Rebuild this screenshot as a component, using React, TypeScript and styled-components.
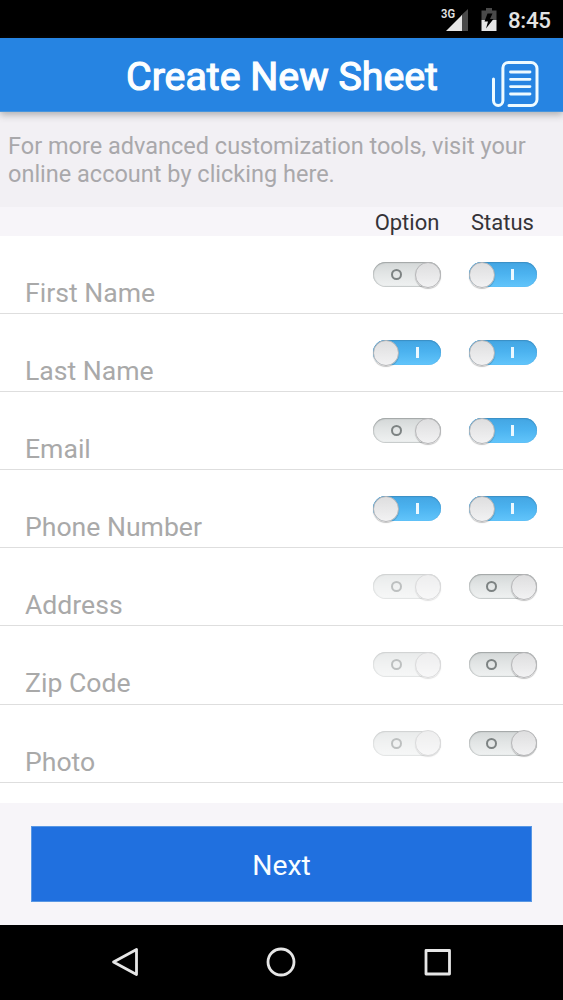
import React from "react";
import styled, { createGlobalStyle } from "styled-components";

const GlobalStyle = createGlobalStyle`
  * { box-sizing: border-box; }
  body { margin: 0; background: #000; font-family: Roboto, "Liberation Sans", sans-serif; }
`;

const Screen = styled.div`
  width: 563px;
  height: 1000px;
  display: flex;
  flex-direction: column;
  overflow: hidden;
  background: #f7f5f9;
`;

const StatusBar = styled.div`
  flex: none;
  height: 38px;
  padding: 1px 12px 0 0;
  display: flex;
  align-items: center;
  justify-content: flex-end;
  background: #000;
`;

const StatusIcons = styled.div`
  display: flex;
  gap: 10px;
  padding: 0 1px 4px 0;
  svg { display: block; }
`;

const Clock = styled.span`
  margin-left: 10px;
  color: #e3e3e3;
  font-size: 22.3px;
  line-height: 26px;
  width: 43px;
  font-weight: 500;
  letter-spacing: -0.3px;
  white-space: nowrap;
`;

const Header = styled.header`
  flex: none;
  position: relative;
  z-index: 1;
  height: 74px;
  display: grid;
  grid-template-columns: 80px 1fr 80px;
  align-items: center;
  background: #2684e2;
  border-bottom: 1px solid #4795dc;
  box-shadow: 0 3px 7px rgba(70, 74, 74, 0.38);
`;

const Title = styled.h1`
  grid-column: 2;
  margin: 4px 0 0 1px;
  text-align: center;
  color: #fcfeff;
  font-size: 39.3px;
  line-height: 46px;
  font-weight: 400;
  -webkit-text-stroke: 1.2px #fcfeff;
  white-space: nowrap;
`;

const SheetButton = styled.button`
  align-self: start;
  margin: 20px 0 0 6px;
  padding: 0;
  width: 52px;
  height: 52px;
  border: 0;
  background: none;
  svg { display: block; }
`;

const Notice = styled.p`
  flex: none;
  height: 95px;
  margin: 0;
  padding: 21px 8px 0;
  background: #f2f0f4;
  color: #a9a8ab;
  font-size: 23.5px;
  line-height: 27.5px;
`;

const ColumnHeads = styled.div`
  flex: none;
  height: 29px;
  display: grid;
  grid-template-columns: 96px 95px;
  justify-content: end;
  padding: 3px 13px 0 0;
  text-align: center;
  color: #353338;
  font-size: 22px;
  line-height: 26px;
`;

const List = styled.div`
  flex: none;
  height: 567px;
  background: #fff;
`;

const Row = styled.div`
  height: 78.1px;
  display: grid;
  grid-template-columns: 1fr 95.5px 94.5px;
  padding: 0 0 0 25px;
  border-bottom: 1px solid #dedede;
`;

const Label = styled.span`
  padding-top: 41px;
  color: #a9a9a9;
  font-size: 26.6px;
  line-height: 32px;
  white-space: nowrap;
`;

const Switch = styled.div<{ $on: boolean; $faded?: boolean }>`
  margin-top: 26px;
  width: 68px;
  height: 25px;
  border-radius: 13px;
  display: flex;
  align-items: center;
  flex-direction: ${(p) => (p.$on ? "row" : "row-reverse")};
  opacity: ${(p) => (p.$faded ? 0.5 : 1)};
  background: ${(p) =>
    p.$on
      ? "linear-gradient(#43a5e2, #4bb2ef 45%, #62c5fb)"
      : "linear-gradient(#d3d7d7, #e2e5e5 45%, #f0f2f2)"};
  box-shadow: ${(p) =>
    p.$on
      ? "inset 0 1px 1px #3b8fc5, inset 0 0 1px #4aa5dc"
      : "inset 0 1px 1px #a2a7a7, inset 0 0 1px 1px #c4c8c8"};
`;

const Thumb = styled.span`
  flex: none;
  width: 26px;
  height: 26px;
  border-radius: 50%;
  border: 1px solid #b6b6b8;
  background: linear-gradient(#dededf, #f2f2f3);
  box-shadow: 0 1px 1px rgba(0, 0, 0, 0.24);
`;

const MarkSlot = styled.span<{ $on: boolean }>`
  flex: 1;
  display: flex;
  justify-content: center;
  padding: ${(p) => (p.$on ? "0 6px 0 0" : "0 0 0 4px")};
`;

const OnMark = styled.i`
  width: 3px;
  height: 11px;
  background: #ecf8ff;
`;

const OffMark = styled.i`
  width: 11px;
  height: 11px;
  border-radius: 50%;
  border: 2px solid #7d8383;
`;

const Footer = styled.div`
  flex: none;
  height: 122px;
  padding: 23px 31px;
`;

const NextButton = styled.button`
  display: block;
  width: 501px;
  height: 76px;
  padding: 2px 0 0;
  border: 1px solid #5897e4;
  background: #2070df;
  color: #f8fdff;
  font-family: inherit;
  font-size: 28.3px;
`;

const NavBar = styled.nav`
  flex: none;
  height: 75px;
  padding: 0 46.5px 1px;
  display: grid;
  grid-template-columns: repeat(3, 1fr);
  justify-items: center;
  align-items: center;
  background: #000;
  svg { display: block; }
`;

const fields: { name: string; option: boolean; status: boolean }[] = [
  { name: "First Name", option: false, status: true },
  { name: "Last Name", option: true, status: true },
  { name: "Email", option: false, status: true },
  { name: "Phone Number", option: true, status: true },
  { name: "Address", option: false, status: false },
  { name: "Zip Code", option: false, status: false },
  { name: "Photo", option: false, status: false },
];

function Toggle({ on, faded }: { on: boolean; faded?: boolean }) {
  return (
    <Switch $on={on} $faded={faded} role="switch" aria-checked={on}>
      <Thumb />
      <MarkSlot $on={on}>{on ? <OnMark /> : <OffMark />}</MarkSlot>
    </Switch>
  );
}

const SignalIcon = () => (
  <svg width="30" height="32" viewBox="0 0 30 32">
    <text x="0" y="15.500" fill="#e3e3e3" fontFamily="Roboto, sans-serif" fontSize="12.500" fontWeight="600" textLength="14" lengthAdjust="spacingAndGlyphs">3G</text>
    <path d="M20 13.500 27 7v22H20z" fill="#4a4a4a" />
    <path d="M5 29 21 13V29z" fill="#e6e6e6" />
  </svg>
);

const BatteryIcon = () => (
  <svg width="16" height="32" viewBox="0 0 16 32">
    <path d="M5 6h6v2.500h4.500V18H.500V8.500H5z" fill="#4a4a4a" />
    <path d="M.500 18h15v11H.500z" fill="#e6e6e6" />
    <path d="M11.500 11.500H6.500L3.500 19.500h3.500L5 26.500l7.500-9.500H9z" fill="#000" />
  </svg>
);

const SheetIcon = () => (
  <svg width="52" height="52" viewBox="0 0 52 52" fill="none" stroke="#eefaff" strokeWidth="3" strokeLinecap="round" strokeLinejoin="round">
    <path d="M4.500 21v21.500a4.700 5 0 0 0 9.400 0V10a5.500 5.500 0 0 1 5.500-5.500H42a6 6 0 0 1 6 6v31a6 6 0 0 1-6 6H20" />
    <path d="M21.500 14h19.500M21.500 21.300h19.500M21.500 28.600h19.500M21.500 36h19.500" strokeWidth="2.800" />
  </svg>
);

export default function App() {
  return (
    <Screen>
      <GlobalStyle />
      <StatusBar>
        <StatusIcons>
          <SignalIcon />
          <BatteryIcon />
        </StatusIcons>
        <Clock>8:45</Clock>
      </StatusBar>
      <Header>
        <Title>Create New Sheet</Title>
        <SheetButton aria-label="Sheets"><SheetIcon /></SheetButton>
      </Header>
      <Notice>
        For more advanced customization tools, visit your<br />online account by clicking here.
      </Notice>
      <ColumnHeads><span>Option</span><span>Status</span></ColumnHeads>
      <List>
        {fields.map((f) => (
          <Row key={f.name}>
            <Label>{f.name}</Label>
            <Toggle on={f.option} faded={!f.status} />
            <Toggle on={f.status} />
          </Row>
        ))}
      </List>
      <Footer><NextButton>Next</NextButton></Footer>
      <NavBar>
        <svg width="32" height="32" viewBox="0 0 32 32" fill="none" stroke="#e6e6e6" strokeWidth="2.800" strokeLinejoin="round"><path d="M27.500 3.500v25L4.500 16z" /></svg>
        <svg width="32" height="32" viewBox="0 0 32 32" fill="none" stroke="#e6e6e6" strokeWidth="2.800"><circle cx="16" cy="16" r="13" /></svg>
        <svg width="32" height="32" viewBox="0 0 32 32" fill="none" stroke="#e6e6e6" strokeWidth="2.800" strokeLinejoin="round"><path d="M4 4.500h23.500V28H4z" /></svg>
      </NavBar>
    </Screen>
  );
}
